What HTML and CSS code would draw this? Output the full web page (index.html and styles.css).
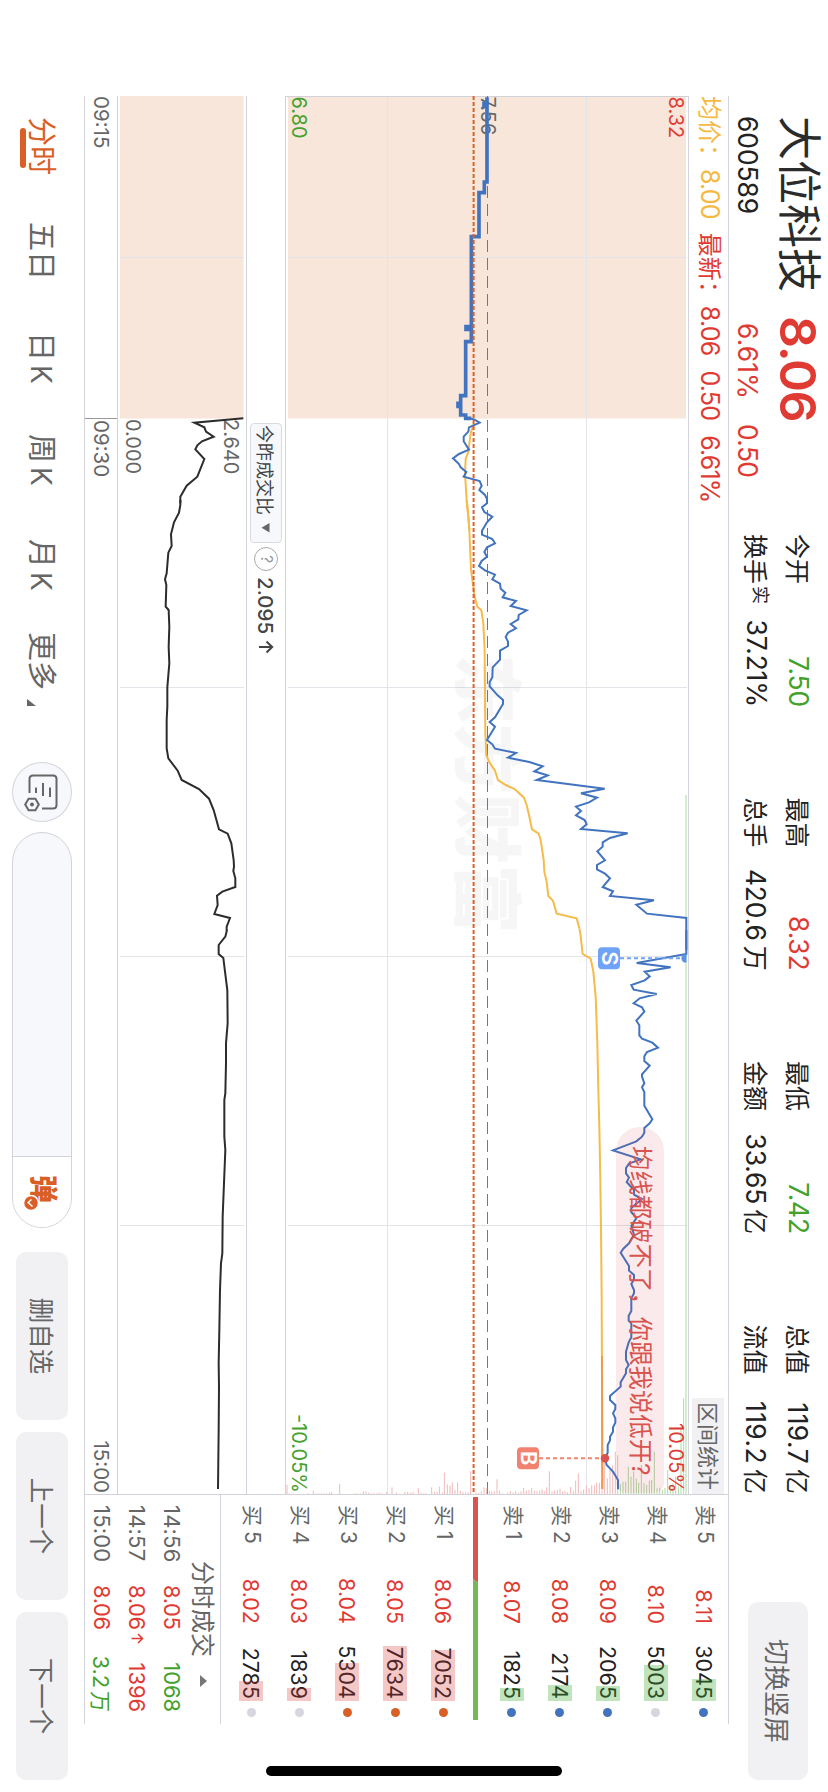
FILE: index.html
```html
<!DOCTYPE html>
<html lang="zh-CN">
<head>
<meta charset="utf-8">
<title>大位科技 600589</title>
<link rel="stylesheet" href="styles.css">
</head>
<body>
<div class="device">
<div class="screen">
  <header class="header">
    <div class="quote">
      <div class="quote-main"><span class="name">大位科技</span><span class="price">8.06</span></div>
      <div class="quote-sub"><span class="code">600589</span><span class="pct">6.61%</span><span class="chg">0.50</span></div>
    </div>
    <div class="stats">
      <div class="stat"><span>今开</span><b class="down">7.50</b></div>
      <div class="stat"><span>最高</span><b class="up">8.32</b></div>
      <div class="stat"><span>最低</span><b class="down">7.42</b></div>
      <div class="stat"><span>总值</span><b>119.7<i>亿</i></b></div>
      <div class="stat"><span>换手<sup>实</sup></span><b>37.21%</b></div>
      <div class="stat"><span>总手</span><b>420.6<i>万</i></b></div>
      <div class="stat"><span>金额</span><b>33.65<i>亿</i></b></div>
      <div class="stat"><span>流值</span><b>119.2<i>亿</i></b></div>
    </div>
    <button class="switch">切换竖屏</button>
  </header>

  <main class="panel">
    <section class="charts">
      <div class="legend">
        <span class="avg">均价：<em>8.00</em></span>
        <span class="up">最新：<em>8.06</em></span>
        <span class="up"><em>0.50</em></span>
        <span class="up"><em>6.61%</em></span>
        <span class="range">区间统计</span>
      </div>

      <div class="price-chart">
        <svg viewBox="96 140 1398 402" width="1398" height="402">
          <rect class="auction" x="96" y="142" width="322.5" height="398"/>
          <path class="grid" d="M257.5 141V540M687.5 141V540M956.5 141V540M1225.5 141V540M96 241.5H1494M96 440.5H1494"/>
          <path class="frame" d="M96.5 140V542"/>
          <text class="watermark" x="654" y="367">东方财富</text>
          <path class="mid" d="M96 340.5H1494"/>
          <g transform="matrix(0 -.33333 .33333 0 1350 414)">
            <path class="bar-red" d="M13 432V415M21 432V428M29 432V430M37 432V430M53 432V412M61 432V425M69 432V425M76 432V410M85 432V428M91 432V368M100 432V403M108 432V407M115 432V397M123 432V420M131 432V397M139 432V422M147 432V427M155 432V427M163 432V427M170 432V363M186 432V428M194 432V428M202 432V424M210 432V412M218 432V414M226 432V422M233 432V424M241 432V424M249 432V388M257 432V422M265 432V430M281 432V428M289 432V424M297 432V428M305 432V424M313 432V428M321 432V424M329 432V414M337 432V422M345 432V420M353 432V414M361 432V422M369 432V424M377 432V422M384 432V418M391 432V424M398 432V412M406 432V364M414 432V424M422 432V422M430 432V420M438 432V416M446 432V424M453 432V422M461 432V426M470 432V411M478 432V422M485 432V392M493 432V370M501 432V424M509 432V418M517 432V406M525 432V414M533 432V406M541 432V406M548 432V397M556 432V398M564 432V395M572 432V335M580 432V385M588 432V358M596 432V345M604 432V305M611 432V316"/>
            <path class="bar-green" d="M619 432V402M627 432V395M635 432V395M643 432V350M651 432V380M659 432V365M667 432V386M674 432V398M682 432V345M690 432V400M698 432V405M706 432V392M713 432V390M721 432V305M729 432V415M737 432V413M745 432V420M753 432V414M761 432V360M769 432V405M777 432V400M785 432V380M793 432V410M801 432V235M809 432V145"/>
            <path class="bar-green" d="M816 432V-1665"/>
          </g>
          <g transform="matrix(0 -.33333 .33333 0 1350 828)">
            <path class="bar-red" d="M861 432V405M868 432V430M876 432V430M925 432V430M940 432V422M948 432V430M956 432V430M964 432V430M972 432V430M980 432V430M988 432V428M995 432V426M1019 432V402M1065 432V430M1073 432V430M1081 432V430M1090 432V424M1098 432V424M1106 432V428M1114 432V430M1122 432V430M1130 432V430M1138 432V428M1146 432V430M1160 432V426M1176 432V412M1190 432V428M1215 432V426M1223 432V426M1231 432V428M1239 432V426"/>
          </g>

          <text class="tick gray" x="96.5" y="347.5">7.56</text>
          <g transform="matrix(0 -.33333 .33333 0 80 414)">
            <path class="avg-line" d="M180 1030L170 1060 163 1115 155 1137 153 1180 158 1260 163 1310 166 1350"/>
            <path class="price-line thick" d="M219 52V70H210V80H219V306H211V338H195V470H172V740H156V748H172V785H155V947H140V970H132V979H140V1005H155V1015H172"/>
            <path class="price-line" d="M165 1015L180 1018 197 1028 165 1042 163 1055 149 1070 149 1084 165 1109 135 1122 117 1135 135 1152 140 1162 157 1176 149 1190 197 1203 203 1217 196 1230 213 1245 219 1257 219 1270"/>
          </g>
          <g transform="matrix(0 -.33333 .33333 0 500 414)">
            <path class="avg-line" d="M158 0L163 50 166 90 171 210 182 290 190 320 202 331 208 370 212 450 214 700 217 765 225 785 243 812 252 840 275 855 302 867 330 893 338 915 345 945 354 988 374 1001 380 1020 389 1080 391 1115 398 1145 403 1188 417 1202 428 1241 488 1255 496 1285"/>
            <path class="price-line" d="M219 0L219 10 204 22 211 36 235 50 219 67 204 92 204 104 235 117 243 130 219 142 211 156 219 170 203 183 195 198 213 211 243 224 235 238 258 251 260 266 274 278 266 292 306 303 290 318 338 331 314 345 313 358 290 372 306 385 282 398 275 411 282 425 282 438 258 452 258 479 236 502 235 532 227 546 227 559 251 586 267 600 267 612 243 652 227 666 243 680 219 720 235 733 243 746 306 759 282 773 346 786 386 799 361 814 401 826 368 840 572 866 501 880 549 893 525 907 486 920 501 933 486 946 512 960 518 973 501 987 641 1000 588 1014 566 1027 566 1040 550 1054 573 1081 549 1095 549 1108 573 1121 588 1135 566 1161 597 1174 588 1188 720 1201 667 1214 699 1241 817 1254 817 1350"/>
          </g>
          <g transform="matrix(0 -.33333 .33333 0 930 414)">
            <path class="avg-line" d="M496 -5L499 10 506 72 530 86 538 125 545 200 550 340 553 480 556 590 559 750 561 900 563 1100 564 1350 565 1677"/>
            <path class="avg-line late" d="M564 1278L565 1677"/>
            <path class="price-line" d="M817 0L817 72 668 99 770 112 692 125 707 139 692 151 652 165 659 179 728 192 677 205 659 220 684 232 691 245 667 272 676 286 676 316 684 326 715 338 732 353 699 366 691 379 691 393 707 407 684 433 684 440 691 460 684 472 691 486 691 527 715 568 707 580 691 594 691 608 684 620 667 634 636 646 597 661 680 688 645 701 636 714 636 730 645 743 638 756 660 780 660 794 684 807 652 834 652 847 668 863 652 888 660 914 645 940 628 956 620 968 645 1008 645 1022 660 1035 660 1048 652 1062 660 1080 660 1090 652 1105 652 1143 644 1157 644 1172 652 1180 652 1222 644 1237 636 1265 636 1290"/>
          </g>
          <g transform="matrix(0 -.33333 .33333 0 1350 414)">
            <path class="price-line" d="M636 20L636 30 644 45 636 58 636 70 620 97 620 110 588 138 588 150 604 165 604 177 597 190 604 205 604 218 597 232 597 245 588 260 588 271 581 285 581 308 573 325 578 345 597 365 612 390 612 418"/>
          </g>
          <path class="last" d="M96 354.4H1494"/>

          <path class="lead-s" d="M958.3 208V146"/>
          <path class="dot-s" d="M954.3 141.5h8.2a4.2 4.2 0 1 1 -8.2 0z"/>
          <rect class="mark-s" x="947.3" y="208" width="22" height="22" rx="4"/>
          <text class="mark-text" x="958.3" y="226.5">S</text>
          <path class="lead-b" d="M1458.3 289V228"/>
          <circle class="dot-b" cx="1458.3" cy="223" r="4.2"/>
          <rect class="mark-b" x="1447.3" y="289" width="22" height="22" rx="4"/>
          <text class="mark-text" x="1458.3" y="307.2">B</text>

          <text class="tick red" x="96.5" y="159.5">8.32</text>
          <text class="tick green" x="96.5" y="536">6.80</text>
          <text class="tick green end" x="1493" y="536">-10.05%</text>
        </svg>
        <div class="bubble">均线都破不了，你跟我说低开?</div>
        <div class="limit">10.05%</div>
      </div>

      <div class="sub-legend">
        <span class="selector">今昨成交比<svg width="10" height="9" viewBox="0 0 10 9"><path d="M0 .5H9.6L4.8 8.5z"/></svg></span>
        <span class="help">?</span>
        <span class="ratio">2.095</span>
        <svg class="arrow" width="14" height="16" viewBox="0 0 14 16"><path d="M7 15V2M1.5 7.5L7 1.8 12.500 7.500"/></svg>
      </div>

      <div class="ratio-chart">
        <svg viewBox="96 582 1398 128" width="1398" height="128">
          <rect class="auction" x="96" y="584.5" width="322.5" height="123.500"/>
          <path class="grid" d="M257.500 584V708M687.500 584V708M956.500 584V708M1225.500 584V708"/>
          <text class="tick gray" x="419" y="604.500">2.640</text>
          <text class="tick gray" x="419" y="702.500">0.000</text>
          <g transform="matrix(0 -.33333 .33333 0 80 828)"><path class="ratio-line" d="M730 1015L583 1028 613 1042 618 1055 641 1070 606 1084 592 1096 586 1108 613 1137 592 1190 560 1217 541 1250 541 1270"/></g>
          <g transform="matrix(0 -.33333 .33333 0 500 828)"><path class="ratio-line" d="M541 0L541 15 537 38 522 67 513 103 515 138 505 158 500 220 495 238 499 255 497 320 506 330 508 380 506 440 508 490 502 562 502 620 500 660 500 745 505 775 533 812 545 840 597 867 627 896 641 930 657 988 683 1001 694 1030 701 1080 702 1100 700 1113 706 1135 706 1161 667 1175 651 1187 653 1215 643 1242 690 1254 680 1280 680 1292"/></g>
          <g transform="matrix(0 -.33333 .33333 0 930 828)"><path class="ratio-line" d="M681 0L676 20 656 45 656 72 670 84 675 125 682 180 683 280 678 340 678 400 676 490 673 510 673 620 676 660 672 760 668 860 667 970 663 1000 660 1080 658 1200 656 1300 657 1370 656 1500 654 1677"/></g>
        </svg>
      </div>

      <div class="time-axis">
        <span class="t-pre">09:15</span><span class="t-open">09:30</span><span class="t-close">15:00</span>
      </div>
    </section>

    <aside class="book">
      <div class="depth">
        <div class="level"><span>卖 5</span><b>8.11</b><em><u class="g" style="width:22px"></u>3045</em><i class="blue"></i></div>
        <div class="level"><span>卖 4</span><b>8.10</b><em><u class="g" style="width:36px"></u>5003</em><i></i></div>
        <div class="level"><span>卖 3</span><b>8.09</b><em><u class="g" style="width:15px"></u>2065</em><i class="blue"></i></div>
        <div class="level"><span>卖 2</span><b>8.08</b><em><u class="g" style="width:16px"></u>2174</em><i class="blue"></i></div>
        <div class="level"><span>卖 1</span><b>8.07</b><em><u class="g" style="width:13px"></u>1825</em><i class="blue"></i></div>
        <svg class="balance" width="224" height="5" viewBox="0 0 224 5"><path fill="#d9544f" d="M0 0H86L82 5H0z"/><path fill="#73b856" d="M86 0H223V5H82z"/></svg>
        <div class="level"><span>买 1</span><b>8.06</b><em><u style="width:51px"></u>7052</em><i class="orange"></i></div>
        <div class="level"><span>买 2</span><b>8.05</b><em><u style="width:55px"></u>7634</em><i class="orange"></i></div>
        <div class="level"><span>买 3</span><b>8.04</b><em><u style="width:38px"></u>5304</em><i class="orange"></i></div>
        <div class="level"><span>买 4</span><b>8.03</b><em><u style="width:13px"></u>1839</em><i></i></div>
        <div class="level"><span>买 5</span><b>8.02</b><em><u style="width:20px"></u>2785</em><i></i></div>
      </div>
      <div class="trades">
        <div class="trades-title">分时成交<svg width="12" height="7" viewBox="0 0 12 7"><path d="M0 7L6 0 12 7z"/></svg></div>
        <div class="trade"><span>14:56</span><b>8.05</b><em class="down">1068</em></div>
        <div class="trade"><span>14:57</span><b>8.06<svg width="11" height="13" viewBox="0 0 11 13"><path d="M5.500 12.500V1.500M1 6L5.500 1.500 10 6"/></svg></b><em class="up">1396</em></div>
        <div class="trade"><span>15:00</span><b>8.06</b><em class="down">3.2<i>万</i></em></div>
      </div>
    </aside>
  </main>

  <footer class="toolbar">
    <nav class="tabs">
      <span class="tab active">分时</span><span class="tab">五日</span><span class="tab">日<i>K</i></span><span class="tab">周<i>K</i></span><span class="tab">月<i>K</i></span><span class="tab more">更多<svg width="7" height="9" viewBox="0 0 7 9"><path d="M7 0V9H0z"/></svg></span>
    </nav>
    <button class="settings">
      <svg width="60" height="60" viewBox="0 0 60 60"><path d="M31 42.500H17Q13.500 42.500 13.500 39V19Q13.500 15.500 17 15.500H43Q46.500 15.500 46.500 19V30M25.500 36H31M21 29H34M25.500 22H35"/><path d="M42.500 33.200L48.300 36.600V43.400L42.500 46.800 36.700 43.400V36.600z"/><circle cx="42.500" cy="40" r="2"/></svg>
    </button>
    <div class="input">
      <div class="danmu"><span>弹</span><svg width="16" height="16" viewBox="0 0 16 16"><circle cx="8" cy="8" r="7.500"/><path d="M4.500 7.500L7.500 10.800 11.500 6.500"/></svg></div>
    </div>
    <div class="actions"><button>删自选</button><button>上一个</button><button>下一个</button></div>
  </footer>
  <div class="home-bar"></div>
</div>
</div>
</body>
</html>
```
FILE: styles.css
```css
* { box-sizing: border-box; }
body { margin: 0; background: #fff; }
i, em { font-style: normal; }
b { font-weight: 400; }
button { border: 0; padding: 0; margin: 0; font: inherit; color: inherit; background: none; }
svg { display: block; }

.device { width: 828px; height: 1792px; overflow: hidden; }
.screen {
  position: relative;
  width: 1792px; height: 828px;
  transform-origin: 0 0;
  transform: translateX(828px) rotate(90deg);
  font-family: Inter, "Noto Sans CJK SC", sans-serif;
  color: #222;
  white-space: nowrap;
  display: flex; flex-direction: column;
}
.up { color: #df3b33; }
.down { color: #43a12c; }

/* header */
.header { height: 99px; display: flex; padding-left: 116px; }
.quote { width: 418px; }
.quote-main { display: flex; align-items: center; height: 60px; }
.name { font-size: 44px; width: 200px; height: 63px; line-height: 61px; color: #2b2b2b; }
.price { font-size: 50px; font-weight: 600; color: #df3b33; letter-spacing: -1.300px; }
.quote-sub { display: flex; align-items: center; height: 39px; font-size: 26.500px; }
.code { width: 207px; letter-spacing: -.1px; }
.pct { width: 101px; color: #df3b33; letter-spacing: .1px; }
.chg { color: #df3b33; letter-spacing: -.700px; }
.stats { display: grid; grid-template-columns: repeat(4, 263.500px); grid-template-rows: 42px 42px; padding-top: 8px; width: 1068px; }
.stat { display: flex; justify-content: space-between; align-items: center; width: 173px; font-size: 25px; }
.stat b { font-size: 26.500px; letter-spacing: -.2px; }
.stat b i { font-size: 25px; margin-left: 5px; }
.stat sup { font-size: 18px; line-height: 1; vertical-align: 8px; margin-left: 2px; }
.stat:nth-child(4n) { width: 170px; }
.stat:nth-child(4n) b { letter-spacing: .4px; }
.switch { width: 178px; height: 60px; margin-top: 20px; padding-bottom: 2px; border-radius: 10px; background: #f1f1f4; color: #666; font-size: 26px; }

/* panel */
.panel { margin-left: 96px; width: 1628px; height: 645px; border-top: 1px solid #d2d3da; border-bottom: 1px solid #d2d3da; display: flex; }
.charts { width: 1399px; border-right: 1px solid #d2d3da; display: flex; flex-direction: column; }
.legend { height: 40px; border-bottom: 1px solid #d2d3da; display: flex; align-items: center; font-size: 24px; gap: 14px; line-height: 36px; }
.legend > span:not(.range) { height: 39px; }
.legend em { font-size: 25px; letter-spacing: -.800px; margin-left: 1px; }
.avg { color: #f5b942; }
.range { margin-left: auto; width: 96px; height: 32px; line-height: 32px; text-align: center; background: #f1f1f4; color: #666; font-size: 22px; }
.price-chart { position: relative; height: 403px; border-bottom: 1px solid #d2d3da; }
.auction { fill: #f8e6da; }
.grid { stroke: #e3e4ea; fill: none; }
.frame { stroke: #d2d3da; }
.watermark { font: 900 70px "Noto Sans CJK SC", sans-serif; fill: #000; fill-opacity: .035; }
.mid { stroke: #777; stroke-dasharray: 12 6; }
.last { stroke: #dc6228; stroke-width: 2; stroke-dasharray: 4 2; }
.bar-red { stroke: #f2b8b8; stroke-width: 3; fill: none; }
.bar-green { stroke: #acd9a4; stroke-width: 3; fill: none; }
.avg-line, .price-line, .ratio-line { fill: none; stroke-width: 6; stroke-linejoin: miter; stroke-miterlimit: 4; }
.avg-line { stroke: #f5bb4b; }
.avg-line.late { stroke: #ee994c; }
.price-line { stroke: #4173bf; }
.price-line.thick { stroke-width: 11; }
.ratio-line { stroke: #2c2c2c; }
.tick { font-size: 20px; }
.tick.end { text-anchor: end; }
.gray { fill: #666; }
.red { fill: #df3b33; }
.green { fill: #43a12c; }
.lead-s { stroke: #6fa3f7; stroke-width: 2; stroke-dasharray: 4 3; }
.dot-s { fill: #5b92e5; }
.mark-s { fill: #6fa3f7; }
.lead-b { stroke: #f28270; stroke-width: 2; stroke-dasharray: 4 3; }
.dot-b { fill: #d9544f; }
.mark-b { fill: #f28270; }
.mark-text { fill: #fff; font-size: 22px; font-weight: 600; text-anchor: middle; }
.bubble { position: absolute; left: 1031px; top: 24px; width: 366px; height: 48px; padding-left: 19px; line-height: 47px; border-radius: 24px 10px 10px 24px; background: rgba(214, 60, 70, .11); color: #d9544f; font-size: 24.400px; }
.limit { position: absolute; right: 1px; top: 0; line-height: 24px; font-size: 20px; color: #df3b33; }

.sub-legend { height: 39px; border-bottom: 1px solid #d2d3da; padding-left: 327px; display: flex; align-items: center; color: #444; }
.selector { display: flex; align-items: center; gap: 8px; width: 120px; height: 32px; padding-left: 1px; border: 1px solid #dadbe1; border-radius: 4px; background: #f7f8fb; font-size: 18px; }
.selector svg { fill: #666; }
.help { width: 24px; height: 24px; margin-left: 4px; border: 1.500px solid #aaa; border-radius: 50%; color: #999; font-size: 16px; line-height: 21px; text-align: center; }
.ratio { margin-left: 6px; width: 63px; font-size: 20.500px; font-weight: 500; }
.arrow { fill: none; stroke: #444; stroke-width: 2; }
.ratio-chart { height: 129px; border-bottom: 1px solid #d2d3da; }
.time-axis { flex: 1; display: flex; align-items: center; color: #666; font-size: 20.500px; }
.time-axis span { height: 100%; line-height: 32px; }
.t-pre { width: 323px; border-right: 1px solid #999; }
.t-open { padding-left: 1px; }
.t-close { margin-left: auto; padding-right: 1px; }

/* order book */
.book { width: 229px; display: flex; flex-direction: column; }
.depth { height: 508px; border-bottom: 1px solid #d2d3da; }
.level { display: flex; align-items: center; height: 48px; padding-left: 10px; font-size: 21.500px; }
.level span { width: 58px; font-size: 21px; color: #666; line-height: 30px; margin-top: -2px; word-spacing: -1px; }
.level b { width: 61px; text-align: right; color: #df3b33; letter-spacing: 0; }
.level em { position: relative; width: 75px; text-align: right; height: 24px; line-height: 24px; }
.level u { position: absolute; right: -2px; top: 0; height: 24px; background: rgba(217, 50, 50, .27); }
.level u.g { background: rgba(65, 170, 50, .32); }
.level i { width: 9px; height: 9px; margin-left: 9px; border-radius: 50%; background: #d5d6de; }
.level i.blue { background: #4173bf; }
.level i.orange { background: #d95f26; }
.balance { margin: 9.500px 0 6px 2px; }
.trades { flex: 1; font-size: 22px; }
.trades-title { display: flex; align-items: center; gap: 18px; height: 30px; padding-left: 66px; font-size: 24px; color: #666; }
.trades-title svg { fill: #777; margin-top: 2px; }
.trade { display: flex; align-items: center; height: 35px; padding-left: 10px; }
.trade span { width: 80px; color: #666; letter-spacing: .2px; }
.trade b { display: flex; align-items: center; gap: 3px; width: 62px; color: #df3b33; letter-spacing: -.4px; }
.trade b svg { fill: none; stroke: #df3b33; stroke-width: 1.500; }
.trade em { width: 65px; text-align: right; letter-spacing: -.1px; }
.trade em i { font-size: 21px; margin-left: 3px; }

/* toolbar */
.toolbar { height: 84px; display: flex; align-items: center; padding-left: 117px; }
.tabs { display: flex; width: 645px; margin-top: -4px; font-size: 29px; color: #666; }
.tab { position: relative; width: 105px; }
.tab i { margin-left: 4px; font-size: 28px; }
.tab:nth-child(2) { width: 110px; }
.tab:nth-child(3) { width: 102px; }
.tab:nth-child(4) { width: 105px; }
.tab:nth-child(5) { width: 93px; }
.tab.more { display: flex; gap: 9px; align-items: flex-end; }
.more svg { fill: #666; margin-bottom: 4px; }
.tab.active { color: #d95f26; }
.tab.active::after { content: ""; position: absolute; left: 11px; bottom: -3px; width: 40px; height: 6px; border-radius: 3px; background: #d95f26; }
.settings { width: 60px; height: 60px; border-radius: 50%; background: #f7f8fb; box-shadow: inset 0 0 0 1px #d5d6dc; }
.settings svg { fill: none; stroke: #666; stroke-width: 2; }
.settings circle { fill: #666; stroke: none; }
.input { width: 396px; height: 60px; margin-left: 10px; border: 1px solid #d2d3da; border-radius: 30px; background: #f7f8fb; overflow: hidden; display: flex; justify-content: flex-end; }
.danmu { position: relative; width: 71px; background: #fff; border-left: 1px solid #d2d3da; }
.danmu span { display: block; padding-left: 18px; line-height: 56px; font-size: 28px; font-weight: 900; color: #d95f26; }
.danmu svg { position: absolute; left: 38px; top: 32px; fill: #d95f26; stroke: #fff; stroke-width: 1.500; }
.actions { display: flex; gap: 12px; margin-left: 24px; }
.actions button { width: 168px; height: 52px; padding-bottom: 3px; border-radius: 10px; background: #f1f1f4; color: #666; font-size: 25.500px; }
.home-bar { position: absolute; left: 1766px; top: 266px; width: 10px; height: 296px; border-radius: 5px; background: #000; }
```
